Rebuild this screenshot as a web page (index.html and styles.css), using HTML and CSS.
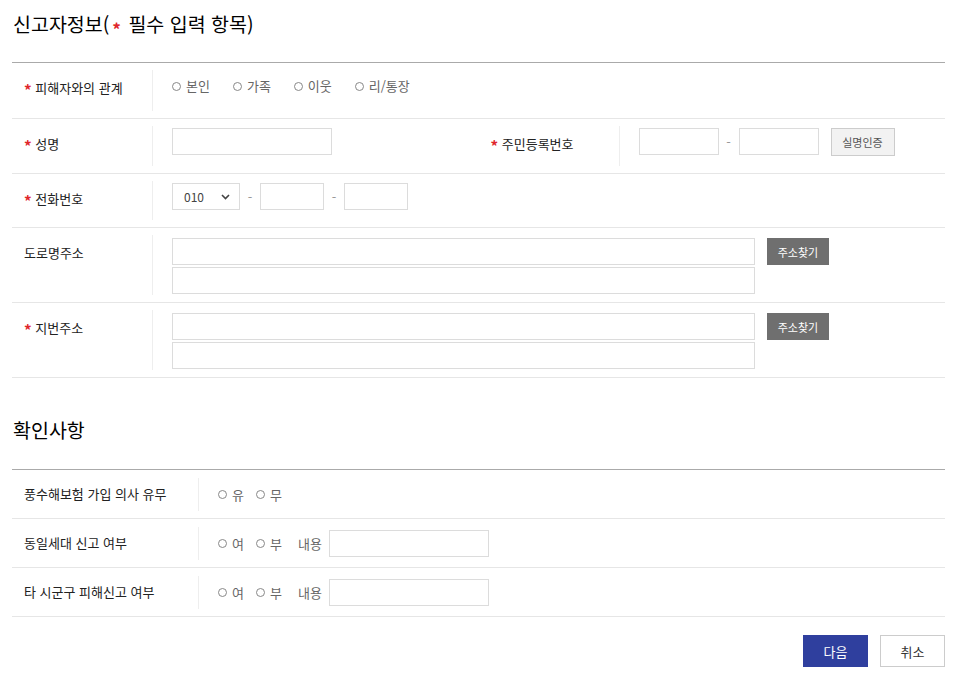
FILE: index.html
```html
<!DOCTYPE html>
<html lang="ko">
<head>
<meta charset="utf-8">
<title>신고자정보</title>
<link rel="stylesheet" href="styles.css">
</head>
<body>
<div class="page">
  <h2 class="sec-title">신고자정보(<span class="req">*</span> 필수 입력 항목)</h2>
  <div class="form-table t1">
    <div class="row">
      <div class="th h41"><span class="req">*</span> 피해자와의 관계</div>
      <div class="td">
        <div class="radios wide">
          <label class="radio"><span class="dot"></span>본인</label>
          <label class="radio"><span class="dot"></span>가족</label>
          <label class="radio"><span class="dot"></span>이웃</label>
          <label class="radio"><span class="dot"></span>리/통장</label>
        </div>
      </div>
    </div>
    <div class="row">
      <div class="half">
        <div class="th"><span class="req">*</span> 성명</div>
        <div class="td"><input type="text" class="inp w159"></div>
      </div>
      <div class="half">
        <div class="th"><span class="req">*</span> 주민등록번호</div>
        <div class="td inline">
          <input type="text" class="inp w79">
          <span class="dash">-</span>
          <input type="text" class="inp w79">
          <button class="btn-gray" type="button">실명인증</button>
        </div>
      </div>
    </div>
    <div class="row">
      <div class="th h39"><span class="req">*</span> 전화번호</div>
      <div class="td inline">
        <div class="select">010<svg width="9" height="6" viewBox="0 0 9 6"><path d="M1 1 L4.5 4.5 L8 1" fill="none" stroke="#444" stroke-width="1.6"/></svg></div>
        <span class="dash">-</span>
        <input type="text" class="inp w64">
        <span class="dash">-</span>
        <input type="text" class="inp w64">
      </div>
    </div>
    <div class="row">
      <div class="th">도로명주소</div>
      <div class="td">
        <div class="addr">
          <div class="addr-inputs">
            <input type="text" class="inp w582">
            <input type="text" class="inp w582">
          </div>
          <button class="btn-dark" type="button">주소찾기</button>
        </div>
      </div>
    </div>
    <div class="row">
      <div class="th"><span class="req">*</span> 지번주소</div>
      <div class="td">
        <div class="addr">
          <div class="addr-inputs">
            <input type="text" class="inp w582">
            <input type="text" class="inp w582">
          </div>
          <button class="btn-dark" type="button">주소찾기</button>
        </div>
      </div>
    </div>
  </div>

  <h2 class="sec-title second">확인사항</h2>
  <div class="form-table t2">
    <div class="row">
      <div class="th">풍수해보험 가입 의사 유무</div>
      <div class="td inline">
        <div class="radios">
          <label class="radio"><span class="dot"></span>유</label>
          <label class="radio"><span class="dot"></span>무</label>
        </div>
      </div>
    </div>
    <div class="row">
      <div class="th">동일세대 신고 여부</div>
      <div class="td inline">
        <div class="radios">
          <label class="radio"><span class="dot"></span>여</label>
          <label class="radio"><span class="dot"></span>부</label>
        </div>
        <span class="note">내용</span>
        <input type="text" class="inp w159">
      </div>
    </div>
    <div class="row">
      <div class="th">타 시군구 피해신고 여부</div>
      <div class="td inline">
        <div class="radios">
          <label class="radio"><span class="dot"></span>여</label>
          <label class="radio"><span class="dot"></span>부</label>
        </div>
        <span class="note">내용</span>
        <input type="text" class="inp w159">
      </div>
    </div>
  </div>

  <div class="actions">
    <button class="btn-primary" type="button">다음</button>
    <button class="btn-cancel" type="button">취소</button>
  </div>
</div>
</body>
</html>
```

FILE: styles.css
```css
* { box-sizing: border-box; }

body {
  margin: 0;
  background: #fff;
  font-family: "Noto Sans CJK KR", "Noto Sans", sans-serif;
  color: #222;
}

.page {
  width: 960px;
  padding: 0 15px 0 12px;
}

.sec-title {
  margin: 0;
  padding: 10px 0 0 1px;
  font-size: 19.5px;
  line-height: 28px;
  font-weight: 400;
  color: #000;
}

.sec-title .req {
  font-size: 17px;
  margin: 0 2px 0 3px;
}

.sec-title.second {
  padding-top: 0;
  margin-top: 38px;
}

.req {
  color: #e0262b;
  font-size: 15px;
  font-weight: 700;
  line-height: 0;
  vertical-align: -0.22em;
}

.form-table {
  border-top: 1px solid #aaa;
  margin-top: 24px;
}

.form-table.t2 { margin-top: 25px; }

.row {
  display: flex;
  border-bottom: 1px solid #e6e6e6;
  padding: 7px 0;
}

.t2 .row { padding: 8px 0 7px; }

.half {
  flex: 1;
  display: flex;
}

.th {
  flex: none;
  width: 141px;
  min-height: 40px;
  padding: 8px 0 0 12px;
  border-right: 1px solid #eee;
  font-size: 13px;
  line-height: 20px;
  color: #222;
}

.th.h41 { min-height: 41px; }
.th.h39 { min-height: 39px; }

.t2 .th {
  width: 187px;
  min-height: 33px;
  padding-top: 6px;
}

.td {
  flex: 1;
  padding: 2px 0 0 19px;
}

.td.inline {
  display: flex;
  align-items: flex-start;
}

.t2 .td.inline {
  align-items: center;
  height: 33px;
  padding-top: 0;
}

.radios {
  display: flex;
  gap: 12px;
  font-size: 13px;
  line-height: 20px;
  color: #666;
}

.radios.wide {
  gap: 23px;
  margin-top: 4px;
}

.radio {
  display: flex;
  align-items: center;
  gap: 5px;
}

.dot {
  width: 9px;
  height: 9px;
  border: 1px solid #888;
  border-radius: 50%;
}

.inp {
  display: block;
  height: 27px;
  margin: 0;
  padding: 0 6px;
  border: 1px solid #dcdcdc;
  background: #fff;
  font: inherit;
  font-size: 13px;
}

.w159 { width: 160px; }
.w79 { width: 80px; }
.w64 { width: 64px; }
.w582 { width: 583px; }

.dash {
  width: 20px;
  text-align: center;
  font-size: 13px;
  line-height: 27px;
  color: #999;
}

.btn-gray {
  margin-left: 12px;
  width: 64px;
  height: 28px;
  border: 1px solid #ccc;
  background: #f2f2f2;
  color: #555;
  font: inherit;
  font-size: 11px;
  padding: 0;
}

.select {
  display: flex;
  align-items: center;
  justify-content: space-between;
  width: 68px;
  height: 27px;
  padding: 0 9px 0 11px;
  border: 1px solid #dcdcdc;
  font-size: 12px;
  color: #444;
}

.addr {
  display: flex;
  align-items: flex-start;
  margin: 1px 0 1px;
}

.addr-inputs {
  display: flex;
  flex-direction: column;
  gap: 2px;
}

.btn-dark {
  margin-left: 12px;
  width: 62px;
  height: 27px;
  border: 0;
  background: #6f6f6f;
  color: #fff;
  font: inherit;
  font-size: 11px;
  padding: 0;
}

.note {
  margin-left: 16px;
  margin-right: 7px;
  font-size: 13px;
  color: #666;
}

.actions {
  display: flex;
  justify-content: flex-end;
  gap: 12px;
  margin-top: 18px;
}

.btn-primary,
.btn-cancel {
  width: 65px;
  height: 32px;
  font: inherit;
  font-size: 13px;
  padding: 0;
}

.btn-primary {
  border: 0;
  background: #2f3f9e;
  color: #fff;
}

.btn-cancel {
  border: 1px solid #ccc;
  background: #fff;
  color: #333;
}
```
